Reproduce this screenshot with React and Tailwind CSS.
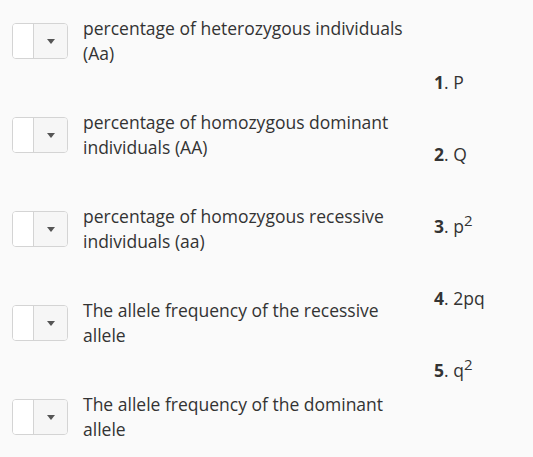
import React from "react";

const questions = [
  "percentage of heterozygous individuals (Aa)",
  "percentage of homozygous dominant individuals (AA)",
  "percentage of homozygous recessive individuals (aa)",
  "The allele frequency of the recessive allele",
  "The allele frequency of the dominant allele",
];

const answers = [
  { n: 1, text: "P" },
  { n: 2, text: "Q" },
  { n: 3, text: "p", sup: "2" },
  { n: 4, text: "2pq" },
  { n: 5, text: "q", sup: "2" },
];

const Select = () => (
  <div className="flex h-[36px] w-[56px] shrink-0 overflow-hidden rounded-[4px] border border-[#d4d4d4] bg-white">
    <div className="w-[21px] bg-white border-r border-[#d4d4d4]"></div>
    <div className="flex flex-1 items-center justify-center bg-[#f6f6f6]">
      <svg width="8" height="5" viewBox="0 0 8 5">
        <path d="M0 0 L8 0 L4 5 Z" fill="#555" />
      </svg>
    </div>
  </div>
);

export default function App() {
  return (
    <div
      className="flex h-[457px] w-[533px] overflow-hidden bg-[#fafafa] text-[#333] text-[17.5px]"
      style={{ fontFamily: "'Open Sans', sans-serif" }}
    >
      <div className="flex w-[420px] shrink-0 flex-col pl-[12px] pt-[23px]">
        {questions.map((q) => (
          <div key={q} className="flex h-[94px] shrink-0 items-start gap-[15px]">
            <Select />
            <p className="w-[330px] -mt-[7px] leading-[25px]">{q}</p>
          </div>
        ))}
      </div>
      <div className="flex flex-col gap-[47px] pl-[14px] pt-[70px]">
        {answers.map((a) => (
          <div key={a.n} className="leading-[25px]">
            <span className="font-bold">{a.n}</span>. {a.text}
            {a.sup && <sup className="text-[15px] top-[-0.5em]">{a.sup}</sup>}
          </div>
        ))}
      </div>
    </div>
  );
}
